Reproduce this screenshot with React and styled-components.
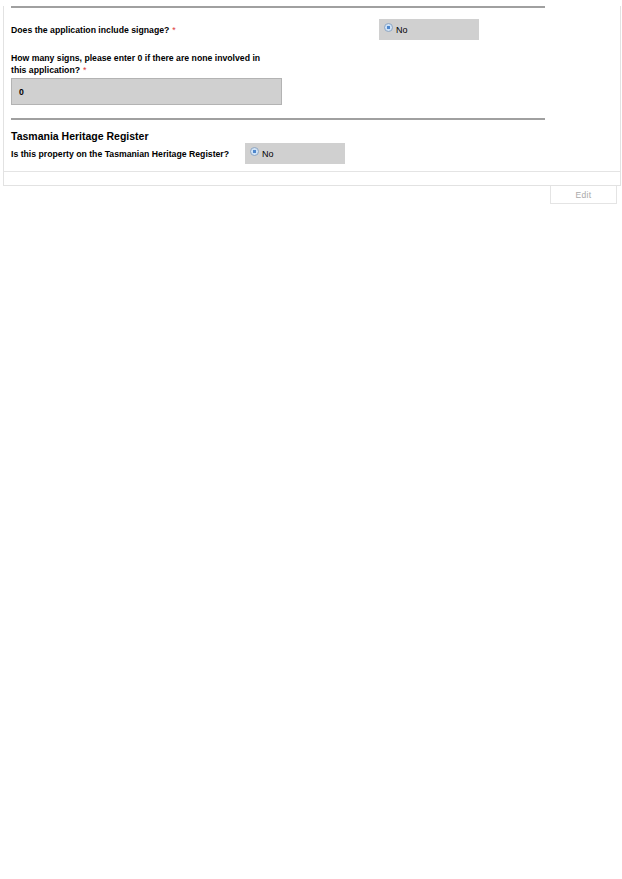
import styled, { createGlobalStyle } from "styled-components";

const GlobalStyle = createGlobalStyle`
  html, body {
    margin: 0;
    padding: 0;
    background: #ffffff;
  }
  body {
    font-family: "Liberation Sans", Arial, sans-serif;
    color: #000000;
  }
`;

const Page = styled.div`
  width: 622px;
  min-height: 879px;
  padding: 0 2px 0 3px;
  box-sizing: border-box;
`;

const Panel = styled.div`
  border: 1px solid #e2e2e2;
  border-top: none;
  width: 618px;
  box-sizing: border-box;
  padding-bottom: 13px;
`;

const Inner = styled.div`
  border-bottom: 1px solid #e4e4e4;
  padding: 0 0 7px 7px;
`;

const Rule = styled.hr`
  width: 534px;
  height: 0;
  margin: ${(p) => p.$top || 0}px 0 0;
  border: none;
  border-top: 2px solid #a0a0a0;
`;

const Row = styled.div`
  display: flex;
  align-items: center;
  gap: ${(p) => p.$gap || 0}px;
  margin-top: ${(p) => p.$top || 0}px;
`;

const Label = styled.div`
  font-size: 8.7px;
  font-weight: bold;
  line-height: 12px;
  width: ${(p) => (p.$width ? `${p.$width}px` : "auto")};
  margin-top: ${(p) => p.$top || 0}px;
  flex: none;
`;

const Req = styled.span`
  color: #e03a3a;
  font-weight: normal;
  margin-left: 3px;
`;

const RadioBox = styled.label`
  display: flex;
  align-items: center;
  width: 100px;
  height: 21px;
  box-sizing: border-box;
  background: #d0d0d0;
  padding: 0 0 0 5px;
  font-size: 9px;
  color: #000;
`;

const Radio = styled.span`
  width: 7px;
  height: 7px;
  border-radius: 50%;
  border: 1px solid #8fa7c4;
  background: radial-gradient(circle, #4d86cc 0 1.6px, #cfe2f6 2px);
  margin-right: 3px;
  margin-top: -4px;
  flex: none;
`;

const Field = styled.div`
  width: 271px;
  height: 27px;
  box-sizing: border-box;
  background: #d0d0d0;
  border: 1px solid #b3b3b3;
  display: flex;
  align-items: center;
  padding-left: 7px;
  font-size: 8.7px;
  font-weight: bold;
  margin-top: 2px;
`;

const Heading = styled.h3`
  font-size: 10.5px;
  font-weight: bold;
  margin: 10px 0 0;
  line-height: 13px;
`;

const Actions = styled.div`
  display: flex;
  justify-content: flex-end;
  padding-right: 3px;
`;

const EditButton = styled.button`
  width: 67px;
  height: 18px;
  background: #ffffff;
  border: 1px solid #e4e4e4;
  border-top: none;
  color: #a9a9a9;
  font-family: "Liberation Sans", Arial, sans-serif;
  font-size: 8.5px;
  letter-spacing: 0.3px;
  cursor: pointer;
`;

function RadioOption({ label }) {
  return (
    <RadioBox>
      <Radio />
      {label}
    </RadioBox>
  );
}

export default function App() {
  return (
    <Page>
      <GlobalStyle />
      <Panel>
        <Inner>
          <Rule $top={6} />
          <Row $top={11}>
            <Label $width={368}>
              Does the application include signage?<Req>*</Req>
            </Label>
            <RadioOption label="No" />
          </Row>
          <Label $width={264} $top={12}>
            How many signs, please enter 0 if there are none involved in this
            application?<Req>*</Req>
          </Label>
          <Field>0</Field>
          <Rule $top={13} />
          <Heading>Tasmania Heritage Register</Heading>
          <Row $gap={16}>
            <Label>Is this property on the Tasmanian Heritage Register?</Label>
            <RadioOption label="No" />
          </Row>
        </Inner>
      </Panel>
      <Actions>
        <EditButton>Edit</EditButton>
      </Actions>
    </Page>
  );
}
